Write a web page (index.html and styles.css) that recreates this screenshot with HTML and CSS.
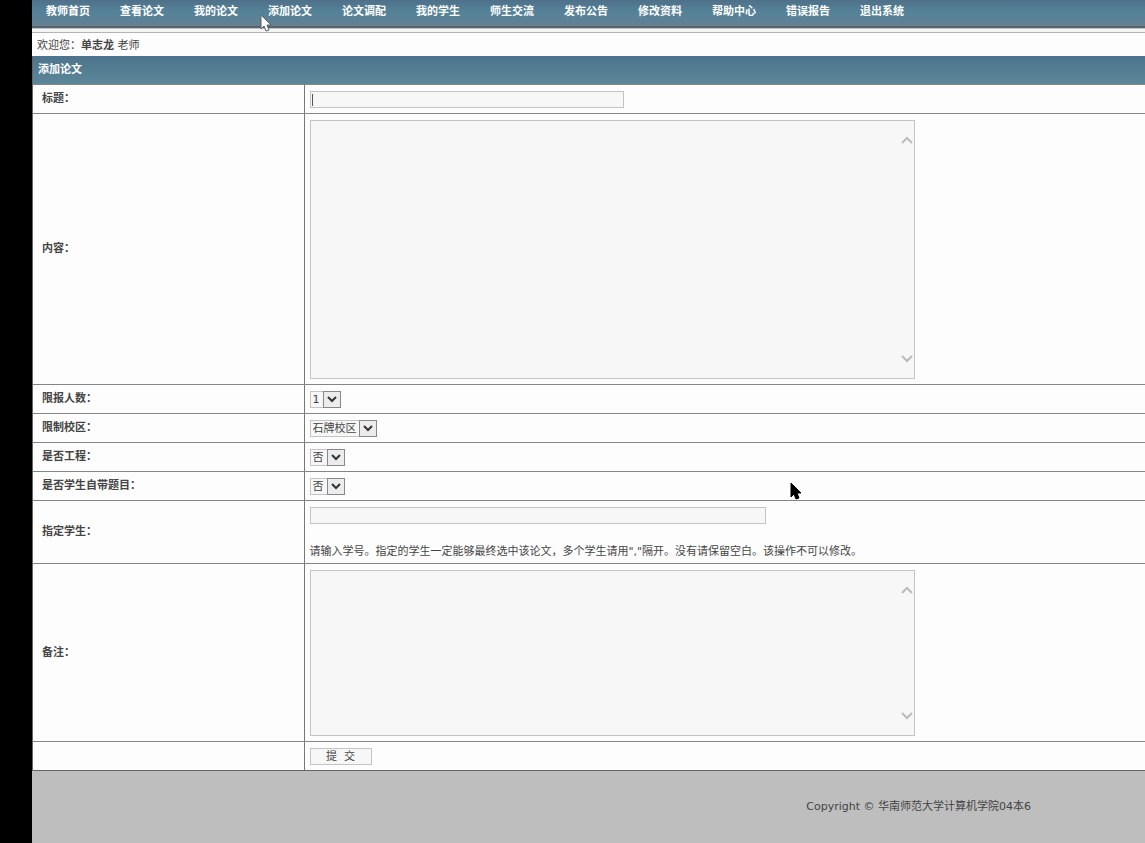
FILE: index.html
```html
<!DOCTYPE html>
<html lang="zh-CN">
<head>
<meta charset="utf-8">
<title>添加论文</title>
<link rel="stylesheet" href="styles.css">
</head>
<body>
<div class="page">
  <nav class="nav">
    <a href="#">教师首页</a>
    <a href="#">查看论文</a>
    <a href="#">我的论文</a>
    <a href="#">添加论文</a>
    <a href="#">论文调配</a>
    <a href="#">我的学生</a>
    <a href="#">师生交流</a>
    <a href="#">发布公告</a>
    <a href="#">修改资料</a>
    <a href="#">帮助中心</a>
    <a href="#">错误报告</a>
    <a href="#">退出系统</a>
  </nav>
  <div class="rule"></div>
  <p class="welcome">欢迎您：<b>单志龙</b> 老师</p>
  <form class="form">
    <h1 class="heading">添加论文</h1>
    <table class="grid">
      <tr>
        <th><label for="title">标题：</label></th>
        <td><span class="field"><input class="text text-title" id="title" type="text"><span class="caret"></span></span></td>
      </tr>
      <tr>
        <th><label for="content">内容：</label></th>
        <td>
          <div class="field">
            <textarea class="area area-content" id="content"></textarea>
            <svg class="arrow arrow-up" viewBox="0 0 12 8"><path d="M1 7 6 2l5 5"/></svg>
            <svg class="arrow arrow-down" viewBox="0 0 12 8"><path d="M1 1l5 5 5-5"/></svg>
          </div>
        </td>
      </tr>
      <tr>
        <th><label for="limit">限报人数：</label></th>
        <td><span class="field"><select class="select select-num" id="limit"><option>1</option></select><span class="drop"><svg viewBox="0 0 10 7"><path d="M1 1l4 4 4-4"/></svg></span></span></td>
      </tr>
      <tr>
        <th><label for="campus">限制校区：</label></th>
        <td><span class="field"><select class="select select-campus" id="campus"><option>石牌校区</option></select><span class="drop"><svg viewBox="0 0 10 7"><path d="M1 1l4 4 4-4"/></svg></span></span></td>
      </tr>
      <tr>
        <th><label for="project">是否工程：</label></th>
        <td><span class="field"><select class="select select-bool" id="project"><option>否</option></select><span class="drop"><svg viewBox="0 0 10 7"><path d="M1 1l4 4 4-4"/></svg></span></span></td>
      </tr>
      <tr>
        <th><label for="own">是否学生自带题目：</label></th>
        <td><span class="field"><select class="select select-bool" id="own"><option>否</option></select><span class="drop"><svg viewBox="0 0 10 7"><path d="M1 1l4 4 4-4"/></svg></span></span></td>
      </tr>
      <tr>
        <th><label for="students">指定学生：</label></th>
        <td>
          <span class="field"><input class="text text-students" id="students" type="text"></span>
          <p class="hint">请输入学号。指定的学生一定能够最终选中该论文，多个学生请用","隔开。没有请保留空白。该操作不可以修改。</p>
        </td>
      </tr>
      <tr>
        <th><label for="remark">备注：</label></th>
        <td>
          <div class="field">
            <textarea class="area area-remark" id="remark"></textarea>
            <svg class="arrow arrow-up" viewBox="0 0 12 8"><path d="M1 7 6 2l5 5"/></svg>
            <svg class="arrow arrow-down" viewBox="0 0 12 8"><path d="M1 1l5 5 5-5"/></svg>
          </div>
        </td>
      </tr>
      <tr>
        <th></th>
        <td><span class="field"><button class="submit" type="button">提&nbsp; 交</button></span></td>
      </tr>
    </table>
  </form>
  <footer class="footer">Copyright © 华南师范大学计算机学院04本6</footer>
</div>
<svg class="cursor cursor-light" viewBox="0 0 12 18"><path d="M1 1v14l3-3 2 5 3-1-2-5h4z"/></svg>
<svg class="cursor cursor-dark" viewBox="0 0 12 18"><path d="M1 1v14l3-3 2 5 3-1-2-5h4z"/></svg>
</body>
</html>
```
FILE: styles.css
```css
* {
  box-sizing: border-box;
}

body {
  margin: 0;
  min-height: 100vh;
  padding-left: 32px;
  background: #000;
  color: #444;
  font: 11px/16px Tahoma, "DejaVu Sans", "Noto Sans CJK SC", sans-serif;
  overflow-x: hidden;
}

.page {
  min-height: 100vh;
  background: #bebebe;
}

.nav {
  display: flex;
  gap: 30px;
  height: 28px;
  padding: 4px 14px;
  background: linear-gradient(#4e7189, #548299 45%, #648092);
  border-bottom: 2px solid #59636a;
}

.nav a {
  flex: none;
  color: #fff;
  font-weight: bold;
  text-decoration: none;
}

.rule {
  height: 5px;
  background: #f4f4f4;
  border-top: 1px solid #c4c4c4;
  border-bottom: 1px solid #b4b4b4;
}

.welcome {
  margin: 0;
  padding: 5px 5px 2px;
  background: #fdfdfd;
}

.form {
  border-left: 1px solid #666;
  background: #fdfdfd;
}

.heading {
  margin: 0;
  padding: 6px 5px;
  background: linear-gradient(#4d748c, #5b8799);
  color: #fff;
  font-size: 11px;
  line-height: 16px;
}

.grid {
  width: 100%;
  border-collapse: collapse;
}

.grid th,
.grid td {
  height: 29px;
  padding: 6px 5px 5px;
  border-top: 1px solid #858585;
  border-bottom: 1px solid #858585;
  text-align: left;
}

.grid th {
  width: 271px;
  padding: 0 9px;
  border-right: 1px solid #777;
}

.grid tr:last-child > * {
  border-bottom-color: #666;
}

.field {
  display: block;
  position: relative;
  width: fit-content;
}

.text,
.area,
.select,
.submit {
  display: block;
  margin: 0;
  border: 1px solid #c4c4c4;
  border-radius: 0;
  outline: none;
  background: #f7f7f7;
  color: #444;
  font: inherit;
}

.text {
  height: 17px;
}

.text-title {
  width: 314px;
}

.text-students {
  width: 456px;
}

.caret {
  position: absolute;
  left: 2px;
  top: 3px;
  width: 1px;
  height: 12px;
  background: #555;
}

.area {
  width: 605px;
  resize: none;
}

.area-content {
  height: 259px;
}

.area-remark {
  height: 166px;
}

.arrow {
  position: absolute;
  right: 2px;
  width: 12px;
  height: 8px;
  fill: none;
  stroke: #bbb;
  stroke-width: 2;
}

.arrow-up {
  top: 16px;
}

.arrow-down {
  bottom: 16px;
}

.select {
  height: 17px;
  padding: 0 2px;
  appearance: none;
  line-height: 15px;
}

.select-num {
  width: 31px;
}

.select-campus {
  width: 67px;
}

.select-bool {
  width: 35px;
}

.drop {
  display: flex;
  align-items: center;
  justify-content: center;
  position: absolute;
  right: 0;
  top: 0;
  width: 18px;
  height: 17px;
  border: 1px solid #888;
  background: #ececec;
  pointer-events: none;
}

.drop svg {
  width: 10px;
  height: 7px;
  fill: none;
  stroke: #333;
  stroke-width: 2;
}

.hint {
  margin: 21px 0 0;
  line-height: 13px;
}

.submit {
  width: 62px;
  height: 17px;
  padding: 0;
  line-height: 15px;
}

.footer {
  padding: 28px 114px 28px 0;
  text-align: right;
}

.cursor {
  position: absolute;
  width: 12px;
  height: 18px;
}

.cursor-light {
  left: 260px;
  top: 14px;
  fill: #fff;
  stroke: #56636c;
}

.cursor-dark {
  left: 790px;
  top: 482px;
  fill: #000;
  stroke: #000;
}
```
